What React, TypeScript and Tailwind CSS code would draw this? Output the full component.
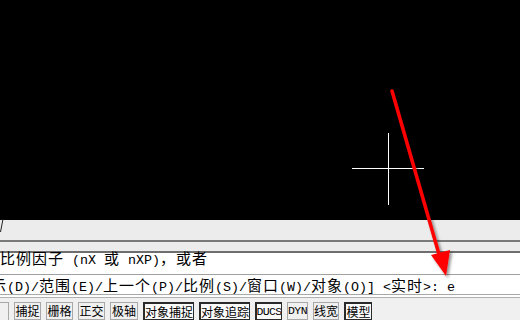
import React from "react";

const isCJK = (c: string) => /[\u3000-\u9fff\uff00-\uffef]/.test(c);

function Mixed({ text }: { text: string }) {
  const runs: { cjk: boolean; s: string }[] = [];
  for (const ch of text) {
    const c = isCJK(ch);
    const last = runs[runs.length - 1];
    if (last && last.cjk === c) last.s += ch;
    else runs.push({ cjk: c, s: ch });
  }
  return (
    <>
      {runs.map((r, i) =>
        r.cjk ? (
          <span
            key={i}
            className="text-[15px] leading-none tracking-[1px] [font-family:'Noto_Sans_CJK_SC',sans-serif]"
          >
            {r.s}
          </span>
        ) : (
          <span
            key={i}
            className="text-[13.33px] leading-none [font-family:'Liberation_Mono',monospace]"
          >
            {r.s}
          </span>
        )
      )}
    </>
  );
}

function Btn({
  label,
  w,
  pressed,
  latin,
}: {
  label: string;
  w: string;
  pressed?: boolean;
  latin?: boolean;
}) {
  return (
    <div
      className={
        "h-[18px] flex items-center justify-center shrink-0 text-black leading-none whitespace-nowrap overflow-hidden " +
        w +
        " " +
        (pressed
          ? "border border-[#2a2a2a] border-t-2 border-l-2 bg-[#fafafa]"
          : "border border-[#a8a8a8] bg-[#f0f0f0]") +
        " " +
        (latin
          ? "text-[11.5px] [font-family:'Liberation_Mono',monospace] tracking-[-0.6px]"
          : "text-[12px] [font-family:'Noto_Sans_CJK_SC',sans-serif]")
      }
    >
      {label}
    </div>
  );
}

export default function App() {
  return (
    <div className="relative w-[520px] h-[320px] overflow-hidden bg-white flex flex-col">
      <div className="h-[220px] bg-black shrink-0" />
      <div className="h-[20px] bg-[#ececec] shrink-0" />
      <div className="h-[2px] bg-[#7a7a7a] shrink-0" />
      <div className="h-[9px] bg-[#ececec] shrink-0" />
      <div className="h-[2px] bg-[#6e6e6e] shrink-0" />
      <div className="h-[21px] bg-white shrink-0 flex items-start whitespace-nowrap text-black">
        <div className="leading-none mt-[-3px]">
          <Mixed text="比例因子 (nX 或 nXP)，或者" />
        </div>
      </div>
      <div className="h-[1px] bg-[#a0a0a0] shrink-0" />
      <div className="h-[19px] bg-white shrink-0 flex items-start pt-[2px] whitespace-nowrap text-black">
        <div className="ml-[-9px] leading-none">
          <Mixed text="示(D)/范围(E)/上一个(P)/比例(S)/窗口(W)/对象(O)] <实时>: e" />
        </div>
      </div>
      <div className="h-[1px] bg-[#a8a8a8] shrink-0" />
      <div className="h-[2px] bg-white shrink-0" />
      <div className="h-[1px] bg-[#b0b0b0] shrink-0" />
      <div className="flex-1 bg-[#f0f0f0] flex items-start gap-[5px] pt-[4px]">
        <div className="h-[18px] w-[9px] shrink-0 border-t border-r border-[#a8a8a8] bg-[#f0f0f0]" />
        <Btn label="捕捉" w="w-[27px]" />
        <Btn label="栅格" w="w-[27px]" />
        <Btn label="正交" w="w-[27px]" />
        <Btn label="极轴" w="w-[28px]" />
        <Btn label="对象捕捉" w="w-[51px]" pressed />
        <Btn label="对象追踪" w="w-[51px]" pressed />
        <Btn label="DUCS" w="w-[27px]" pressed latin />
        <Btn label="DYN" w="w-[21px]" latin />
        <Btn label="线宽" w="w-[26px]" />
        <Btn label="模型" w="w-[28px]" pressed />
      </div>

      <svg
        className="absolute inset-0 pointer-events-none"
        width="520"
        height="320"
        viewBox="0 0 520 320"
      >
        <defs>
          <filter id="sh" x="-50%" y="-50%" width="200%" height="200%">
            <feDropShadow dx="2" dy="2" stdDeviation="1.5" floodColor="#000" floodOpacity="0.45" />
          </filter>
        </defs>
        <line x1="3" y1="219" x2="0.5" y2="232" stroke="#222" strokeWidth="1" />
        <line x1="388.5" y1="133" x2="388.5" y2="205" stroke="#fff" strokeWidth="1" />
        <line x1="352" y1="168.5" x2="424" y2="168.5" stroke="#fff" strokeWidth="1" />
        <g filter="url(#sh)">
          <line x1="392" y1="91" x2="439.5" y2="256" stroke="#ff0000" strokeWidth="3.5" strokeLinecap="round" />
          <polygon points="446,276 431,255 450,250" fill="#ff0000" />
        </g>
      </svg>
    </div>
  );
}
